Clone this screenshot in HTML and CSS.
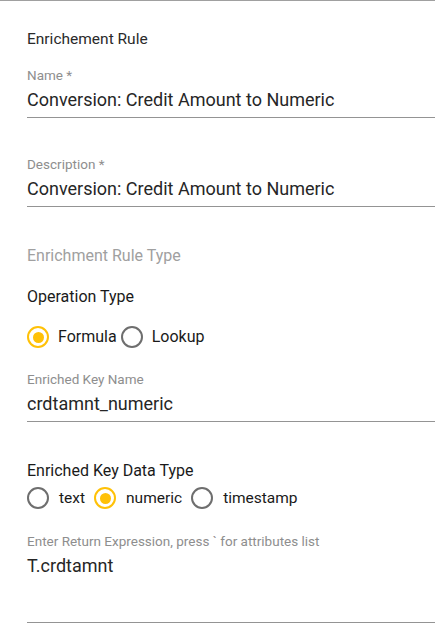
FILE: index.html
```html
<!DOCTYPE html>
<html>
<head>
<meta charset="utf-8">
<link rel="stylesheet" href="styles.css">
</head>
<body>
<div class="card">
  <div class="title">Enrichement Rule</div>

  <div class="field f-name">
    <div class="label">Name *</div>
    <div class="value">Conversion: Credit Amount to Numeric</div>
  </div>

  <div class="field f-desc">
    <div class="label">Description *</div>
    <div class="value">Conversion: Credit Amount to Numeric</div>
  </div>

  <div class="section-muted">Enrichment Rule Type</div>

  <div class="heading h-op">Operation Type</div>
  <div class="radios r-op">
    <span class="radio checked"></span><span class="rlabel op1">Formula</span>
    <span class="radio"></span><span class="rlabel">Lookup</span>
  </div>

  <div class="field f-key">
    <div class="label">Enriched Key Name</div>
    <div class="value">crdtamnt_numeric</div>
  </div>

  <div class="heading h-dt">Enriched Key Data Type</div>
  <div class="radios r-dt">
    <span class="radio"></span><span class="rlabel dt">text</span>
    <span class="radio checked"></span><span class="rlabel dt">numeric</span>
    <span class="radio"></span><span class="rlabel dt">timestamp</span>
  </div>

  <div class="field f-expr">
    <div class="label">Enter Return Expression, press ` for attributes list</div>
    <div class="value expr">T.crdtamnt</div>
  </div>
</div>
</body>
</html>
```

FILE: styles.css
```css
html, body {
  margin: 0;
  padding: 0;
  background: #ffffff;
  overflow: hidden;
}
body {
  font-family: Roboto, "Noto Sans", sans-serif;
  color: #212121;
}
.card {
  border-top: 1px solid #a0a0a0;
  padding: 28px 0 0 27px;
  height: 624px;
  box-sizing: border-box;
}
.title {
  font-size: 15.5px;
  line-height: 20px;
  color: #2a2a2a;
}
.field {
  border-bottom: 1px solid #949494;
  padding-bottom: 5px;
}
.label {
  font-size: 13.5px;
  line-height: 14px;
  color: #8e8e8e;
}
.value {
  font-size: 18px;
  line-height: 24px;
  margin-top: 6px;
  color: #262626;
}
.value.expr {
  padding-bottom: 39px;
}
.f-name { margin-top: 19px; }
.f-desc { margin-top: 39px; }
.f-key { margin-top: 23px; }
.f-expr { margin-top: 24px; }
.section-muted {
  margin-top: 39px;
  font-size: 16px;
  line-height: 20px;
  color: #a0a0a0;
}
.heading {
  font-size: 16px;
  line-height: 20px;
  color: #1a1a1a;
}
.h-op { margin-top: 21px; }
.h-dt { margin-top: 39px; }
.radios {
  display: flex;
  align-items: center;
  height: 24px;
}
.r-op { margin-top: 18px; }
.r-dt { margin-top: 5px; }
.radio {
  width: 22px;
  height: 22px;
  box-sizing: border-box;
  border: 2px solid #6e6e6e;
  border-radius: 50%;
  display: flex;
  align-items: center;
  justify-content: center;
  flex: none;
}
.radio.checked {
  border-color: #ffc107;
}
.radio.checked::after {
  content: "";
  width: 11px;
  height: 11px;
  border-radius: 50%;
  background: #ffc107;
}
.rlabel {
  font-size: 16px;
  line-height: 20px;
  color: #1a1a1a;
  margin-left: 9px;
}
.rlabel.op1 { margin-right: 4px; }
.rlabel.dt { font-size: 15.5px; margin-left: 10px; margin-right: 9px; }
```
